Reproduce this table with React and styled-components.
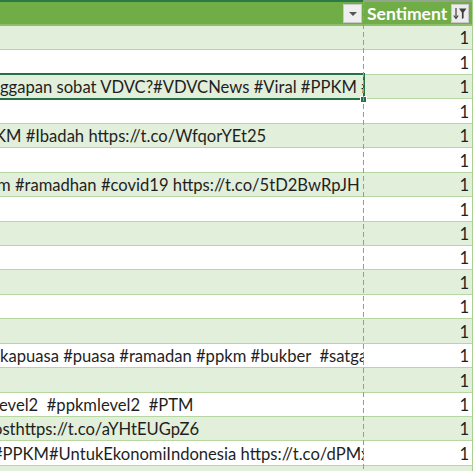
import styled, { createGlobalStyle } from "styled-components";

const GlobalStyle = createGlobalStyle`
  html, body {
    margin: 0;
    padding: 0;
    background: #ffffff;
  }
  body {
    font-family: Lato, "Liberation Sans", Arial, sans-serif;
  }
`;

const Style = {
  Sheet: styled.div`
    position: relative;
    width: 474px;
    height: 471px;
    overflow: hidden;
    background: #ffffff;
  `,
  Table: styled.div`
    width: 473px;
    box-sizing: border-box;
    border-right: 1px solid #a9cf8f;
    display: flex;
    flex-direction: column;
  `,
  HeaderRow: styled.div`
    display: grid;
    grid-template-columns: 364px 1fr;
    height: 26px;
    box-sizing: border-box;
    background: #70ad47;
    border-bottom: 2px solid #8cbf6b;
  `,
  HeadCell: styled.div`
    display: flex;
    align-items: center;
    justify-content: ${(p) => (p.$end ? "flex-end" : "space-between")};
    border-top: 2px solid ${(p) => p.$top};
    padding: 0 ${(p) => p.$pad}px 0 3px;
    color: #ffffff;
    font-weight: bold;
    font-size: 17.5px;
  `,
  DropBtn: styled.div`
    width: 19px;
    height: 19px;
    box-sizing: border-box;
    background: #eeeeee;
    border: 1px solid #c9c9c9;
    display: flex;
    align-items: center;
    justify-content: center;
  `,
  Triangle: styled.div`
    width: 0;
    height: 0;
    border-left: 4px solid transparent;
    border-right: 4px solid transparent;
    border-top: 4px solid #555555;
    margin-top: 1px;
  `,
  FilterBtn: styled.div`
    width: 18px;
    height: 19px;
    box-sizing: border-box;
    background: #ececec;
    border: 1px solid #c9c9c9;
    display: flex;
    align-items: center;
    justify-content: center;
  `,
  Row: styled.div`
    display: grid;
    grid-template-columns: 364px 1fr;
    height: 24.45px;
    flex: none;
    box-sizing: border-box;
    background: ${(p) => (p.$alt ? "#e2efda" : "#ffffff")};
    border-bottom: 1px solid #b7d7a2;
  `,
  TextCell: styled.div`
    position: relative;
    display: flex;
    align-items: flex-end;
    font-size: 16.6px;
    color: #1f1f1f;
    white-space: pre;
  `,
  Clip: styled.div`
    overflow: hidden;
    width: 100%;
    line-height: 22px;
  `,
  Text: styled.span`
    display: inline-block;
    margin-left: ${(p) => p.$shift}px;
  `,
  NumCell: styled.div`
    display: flex;
    align-items: flex-end;
    justify-content: flex-end;
    padding: 0 3px 0 0;
    line-height: 22px;
    font-size: 16.6px;
    color: #1f1f1f;
  `,
  Selection: styled.div`
    position: absolute;
    top: -2px;
    bottom: -2px;
    left: -3px;
    right: -1px;
    border: 2px solid #217346;
    pointer-events: none;
  `,
  Handle: styled.div`
    position: absolute;
    right: -4px;
    bottom: -5px;
    width: 5px;
    height: 5px;
    background: #217346;
    border: 1px solid #ffffff;
  `,
  PageBreak: styled.div`
    position: absolute;
    top: 0;
    bottom: 0;
    left: 363px;
    width: 1px;
    background: repeating-linear-gradient(
      to bottom,
      #9a9a9a 0 5px,
      transparent 5px 8px
    );
  `,
};

const rows = [
  {},
  {},
  { text: "ggapan sobat VDVC?#VDVCNews #Viral #PPKM #PPKMDarurat", shift: 0, selected: true },
  {},
  { text: "KM #Ibadah https://t.co/WfqorYEt25", shift: -5 },
  {},
  { text: "m #ramadhan #covid19 https://t.co/5tD2BwRpJH", shift: -3 },
  {},
  {},
  {},
  {},
  {},
  {},
  { text: "kapuasa #puasa #ramadan #ppkm #bukber  #satgascovid19", shift: 0 },
  {},
  { text: "evel2  #ppkmlevel2  #PTM", shift: -1 },
  { text: "osthttps://t.co/aYHtEUGpZ6", shift: -7 },
  { text: "#PPKM#UntukEkonomiIndonesia https://t.co/dPMx2", shift: -7 },
  {},
];

function SortFilterIcon() {
  return (
    <svg width="14" height="13" viewBox="0 0 14 13">
      <path d="M3 1 V11" stroke="#3d3d3d" strokeWidth="1.2" />
      <path d="M0.8 8.5 L3 11.5 L5.2 8.5" fill="none" stroke="#3d3d3d" strokeWidth="1.2" />
      <path d="M6 1.5 H13.5 L10.6 5.5 V11 L8.9 12 V5.5 Z" fill="#3d3d3d" />
    </svg>
  );
}

function App() {
  return (
    <>
      <GlobalStyle />
      <Style.Sheet>
        <Style.Table>
          <Style.HeaderRow>
            <Style.HeadCell $top="#2a7a45" $pad={2} $end>
              <Style.DropBtn>
                <Style.Triangle />
              </Style.DropBtn>
            </Style.HeadCell>
            <Style.HeadCell $top="#93a58a" $pad={3}>
              <span>Sentiment</span>
              <Style.FilterBtn>
                <SortFilterIcon />
              </Style.FilterBtn>
            </Style.HeadCell>
          </Style.HeaderRow>
          {rows.map((row, i) => (
            <Style.Row key={i} $alt={i % 2 === 0}>
              <Style.TextCell>
                <Style.Clip>
                  {row.text && <Style.Text $shift={row.shift}>{row.text}</Style.Text>}
                </Style.Clip>
                {row.selected && (
                  <Style.Selection>
                    <Style.Handle />
                  </Style.Selection>
                )}
              </Style.TextCell>
              <Style.NumCell>1</Style.NumCell>
            </Style.Row>
          ))}
        </Style.Table>
        <Style.PageBreak />
      </Style.Sheet>
    </>
  );
}

export default App;
